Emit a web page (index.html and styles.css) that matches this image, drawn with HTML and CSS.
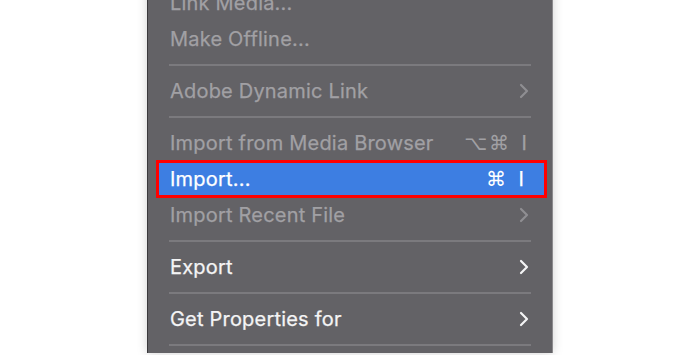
FILE: index.html
```html
<!DOCTYPE html>
<html>
<head>
<meta charset="utf-8">
<link rel="stylesheet" href="styles.css">
</head>
<body>
<div class="page">
  <div class="menu">
    <div class="item disabled"><span class="label">Link Media...</span></div>
    <div class="item disabled"><span class="label">Make Offline...</span></div>
    <div class="sep"></div>
    <div class="item disabled"><span class="label">Adobe Dynamic Link</span><svg class="chev" viewBox="0 0 10 16" width="10" height="16"><polyline points="2,2 8,8 2,14"/></svg></div>
    <div class="sep"></div>
    <div class="item disabled"><span class="label">Import from Media Browser</span><span class="sc"><span class="mod">⌥⌘</span><span class="key">I</span></span></div>
    <div class="item active"><span class="label">Import...</span><span class="sc"><span class="mod">⌘</span><span class="key">I</span></span></div>
    <div class="item disabled"><span class="label">Import Recent File</span><svg class="chev" viewBox="0 0 10 16" width="10" height="16"><polyline points="2,2 8,8 2,14"/></svg></div>
    <div class="sep"></div>
    <div class="item"><span class="label">Export</span><svg class="chev" viewBox="0 0 10 16" width="10" height="16"><polyline points="2,2 8,8 2,14"/></svg></div>
    <div class="sep"></div>
    <div class="item"><span class="label">Get Properties for</span><svg class="chev" viewBox="0 0 10 16" width="10" height="16"><polyline points="2,2 8,8 2,14"/></svg></div>
    <div class="sep"></div>
  </div>
</div>
</body>
</html>
```

FILE: styles.css
```css
html, body {
  margin: 0;
  padding: 0;
  background: #ffffff;
  overflow: hidden;
}

.page {
  width: 700px;
  height: 355px;
  display: flex;
  justify-content: center;
  align-items: flex-start;
  overflow: hidden;
}

.menu {
  width: 404px;
  margin-top: -15px;
  background: #636266;
  border-left: 1px solid #3a393c;
  border-right: 1px solid #8b8a8d;
  box-shadow: 0 0 10px rgba(0, 0, 0, 0.18);
  font-family: "Inter", "Liberation Sans", sans-serif;
  font-size: 20px;
  letter-spacing: 0.2px;
  display: flex;
  flex-direction: column;
}

.item {
  height: 36px;
  display: flex;
  align-items: center;
  justify-content: space-between;
  padding: 0 25px 0 22px;
  color: #f4f4f5;
  -webkit-text-stroke: 0.25px currentColor;
}

.item.disabled {
  color: #a1a0a4;
}

.item.active {
  height: 32px;
  margin: -1px 5px -1px 8px;
  padding: 0 20px 0 11px;
  background: #3d7ee2;
  border: 3px solid #ff0000;
  color: #ffffff;
}

.label {
  white-space: nowrap;
}

.sep {
  height: 16px;
  display: flex;
  align-items: center;
  padding: 0 21px;
}

.sep::before {
  content: "";
  display: block;
  flex: 1;
  height: 2px;
  background: #7b7a7e;
}

.chev {
  fill: none;
  stroke: currentColor;
  stroke-width: 2.2;
  stroke-linecap: round;
  stroke-linejoin: round;
  margin-right: -2px;
}

.item.disabled .chev {
  stroke: #8f8e92;
}

.sc {
  display: flex;
  align-items: center;
}

.mod {
  font-family: "DejaVu Sans", sans-serif;
  font-size: 20px;
  letter-spacing: 2px;
  -webkit-text-stroke: 0;
}

.key {
  width: 8px;
  margin-left: 8px;
  text-align: right;
}
```
